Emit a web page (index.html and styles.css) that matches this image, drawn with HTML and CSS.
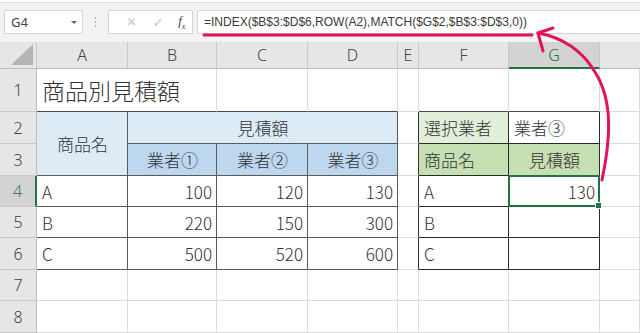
FILE: index.html
```html
<!DOCTYPE html>
<html lang="ja">
<head>
<meta charset="utf-8">
<link rel="stylesheet" href="styles.css">
</head>
<body>
<div class="app">
  <div class="toolbar">
    <div class="namebox"><span>G4</span><span class="caret"></span></div>
    <div class="grip"><i></i><i></i><i></i></div>
    <div class="btns">
      <span class="btn x">✕</span>
      <span class="btn ok">✓</span>
      <span class="btn fx">f<sub>x</sub></span>
    </div>
    <div class="formula">=INDEX($B$3:$D$6,ROW(A2),MATCH($G$2,$B$3:$D$3,0))</div>
  </div>
  <div class="sheet">
    <div class="ch corner"><svg width="22" height="21" viewBox="0 0 22 21"><polygon points="22,0 22,21 0,21" fill="#b5b5b5"/></svg></div>
    <div class="ch">A</div><div class="ch">B</div><div class="ch">C</div><div class="ch">D</div><div class="ch">E</div><div class="ch">F</div><div class="ch sel-col">G</div><div class="ch last"></div>

    <div class="rh">1</div>
    <div class="c title bb">商品別見積額</div><div class="c bb"></div><div class="c bb"></div><div class="c"></div><div class="c bb"></div><div class="c bb"></div><div class="c"></div>

    <div class="rh">2</div>
    <div class="c t b1 ctr span-r">商品名</div><div class="c t b1 ctr span-c">見積額</div><div class="c br"></div><div class="c u g1">選択業者</div><div class="c u">業者③</div><div class="c"></div>

    <div class="rh">3</div>
    <div class="c t b2 ctr">業者①</div><div class="c t b2 ctr">業者②</div><div class="c t b2 ctr">業者③</div><div class="c br"></div><div class="c u g2">商品名</div><div class="c u g2 ctr">見積額</div><div class="c"></div>

    <div class="rh sel-row">4</div>
    <div class="c t">A</div><div class="c t num">100</div><div class="c t num">120</div><div class="c t num">130</div><div class="c br"></div><div class="c u">A</div><div class="c u num active">130</div><div class="c"></div>

    <div class="rh">5</div>
    <div class="c t">B</div><div class="c t num">220</div><div class="c t num">150</div><div class="c t num">300</div><div class="c br"></div><div class="c u">B</div><div class="c u"></div><div class="c"></div>

    <div class="rh">6</div>
    <div class="c t">C</div><div class="c t num">500</div><div class="c t num">520</div><div class="c t num">600</div><div class="c br"></div><div class="c u">C</div><div class="c u"></div><div class="c"></div>

    <div class="rh">7</div>
    <div class="c"></div><div class="c"></div><div class="c"></div><div class="c"></div><div class="c"></div><div class="c"></div><div class="c"></div><div class="c"></div>

    <div class="rh">8</div>
    <div class="c"></div><div class="c"></div><div class="c"></div><div class="c"></div><div class="c"></div><div class="c"></div><div class="c"></div><div class="c"></div>
  </div>
  <svg class="marks" width="640" height="333" viewBox="0 0 640 333">
    <path d="M204 33 L532 33" stroke="#e2125f" stroke-width="3" fill="none" stroke-linecap="round"/>
    <path d="M602 178 C 610 140, 614 100, 595 70 C 583 50, 565 36, 538 31" stroke="#e2125f" stroke-width="3" fill="none" stroke-linecap="round"/>
    <path d="M553 26 L538 31 L543 49" stroke="#e2125f" stroke-width="3" fill="none" stroke-linecap="round" stroke-linejoin="round"/>
  </svg>
</div>
</body>
</html>
```
FILE: styles.css
```css
* { box-sizing: border-box; }
html, body { margin: 0; padding: 0; }
body {
  width: 640px;
  height: 333px;
  overflow: hidden;
  background: #fff;
  font-family: "Noto Sans CJK JP", "Noto Sans", sans-serif;
}
.app {
  position: relative;
  width: 640px;
  height: 333px;
}
.toolbar {
  height: 42px;
  background: #f3f3f3;
  border-top: 1px solid #e0e0e0;
  margin-top: 2px;
  display: flex;
  align-items: flex-start;
  padding: 7px 0 0 4px;
}
.namebox {
  width: 79px;
  height: 24px;
  background: #fff;
  border: 1px solid #d6d6d6;
  display: flex;
  align-items: center;
  justify-content: space-between;
  padding: 0 5px 0 6px;
  font-family: "Noto Sans", sans-serif;
  font-size: 13px;
  color: #444;
}
.caret {
  width: 0;
  height: 0;
  border-left: 3px solid transparent;
  border-right: 3px solid transparent;
  border-top: 3px solid #666;
}
.grip {
  width: 25px;
  height: 24px;
  display: flex;
  flex-direction: column;
  align-items: center;
  justify-content: center;
  gap: 2px;
}
.grip i {
  display: block;
  width: 1px;
  height: 2px;
  background: #b0b0b0;
}
.btns {
  width: 85px;
  height: 24px;
  background: #fff;
  border: 1px solid #d6d6d6;
  display: flex;
  align-items: center;
  padding-left: 9px;
}
.btn {
  width: 29px;
  text-align: center;
  color: #c4c4c4;
  font-size: 12px;
  font-family: "DejaVu Sans", sans-serif;
}
.btn.ok { font-size: 13px; }
.btn.fx {
  width: 22px;
  color: #444;
  font-family: "Liberation Serif", serif;
  font-style: italic;
  font-size: 13px;
}
.btn.fx sub { font-size: 8px; }
.formula {
  flex: 1;
  margin-left: 4px;
  height: 24px;
  background: #fff;
  border: 1px solid #d6d6d6;
  border-right: none;
  display: flex;
  align-items: center;
  padding-left: 6px;
  font-family: "Liberation Sans", sans-serif;
  font-size: 12px;
  color: #3a3a3a;
  white-space: nowrap;
}
.sheet {
  display: grid;
  grid-template-columns: 37px 91px 89px 91px 90px 21px 90px 91px 40px;
  grid-template-rows: 27px 43px 32px 32px 31px 31px 32px 31px 32px;
  margin-top: -2px;
}
.ch, .rh {
  background: #e6e6e6;
  color: #444;
  font-family: "Noto Sans", sans-serif;
  font-weight: 300;
  font-size: 16px;
  display: flex;
  align-items: center;
  justify-content: center;
  border-right: 1px solid #c9c9c9;
  border-bottom: 1px solid #c9c9c9;
}
.ch { border-bottom-color: #bcbcbc; }
.ch.last { border-right: none; }
.corner {
  align-items: flex-end;
  justify-content: flex-end;
  padding: 0 3px 3px 0;
}
.corner svg { display: block; }
.sel-col {
  background: #d3d3d3;
  color: #217346;
  border-bottom: 2px solid #217346;
}
.rh { border-right-color: #c0c0c0; }
.sel-row {
  background: #d3d3d3;
  color: #3d7a55;
  border-right: 2px solid #217346;
}
.c {
  background: #fff;
  border-right: 1px solid #dcdcdc;
  border-bottom: 1px solid #dcdcdc;
  display: flex;
  align-items: center;
  padding: 0 4px 0 5px;
  font-size: 17px;
  font-weight: 300;
  color: #333;
  white-space: nowrap;
}
.title {
  grid-column: span 2;
  font-size: 23px;
  padding-left: 5px;
  padding-bottom: 1px;
}
.bb { border-bottom-color: #4a4a4a; }
.br { border-right-color: #333; }
.t { border-color: #5a5a5a; }
.u { border-color: #2a2a2a; }
.span-r { grid-row: span 2; }
.span-c { grid-column: span 3; }
.ctr { justify-content: center; }
.num { justify-content: flex-end; }
.b1 { background: #ddebf7; }
.b2 { background: #bdd7ee; }
.g1 { background: #e2efda; }
.g2 { background: #c6e0b4; }
.active { position: relative; }
.active::after {
  content: "";
  position: absolute;
  left: -1px;
  top: -1px;
  right: -1px;
  bottom: -1px;
  border: 2px solid #217346;
}
.active::before {
  content: "";
  position: absolute;
  right: -3px;
  bottom: -3px;
  width: 5px;
  height: 5px;
  background: #217346;
  border: 1px solid #fff;
  z-index: 2;
}
.marks {
  position: absolute;
  left: 0;
  top: 0;
  pointer-events: none;
}
```
